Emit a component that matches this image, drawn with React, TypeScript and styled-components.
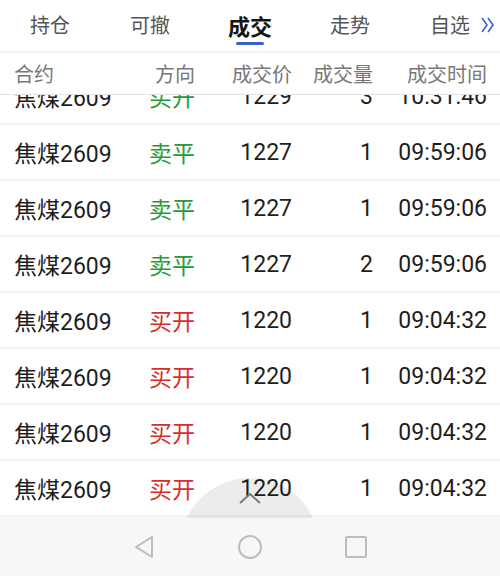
import React from "react";
import styled, { createGlobalStyle } from "styled-components";

const GlobalStyle = createGlobalStyle`
  html, body {
    margin: 0;
    padding: 0;
    background: #ffffff;
  }
  body {
    font-family: Roboto, "Noto Sans CJK SC", sans-serif;
  }
`;

const Screen = styled.div`
  position: relative;
  width: 500px;
  height: 576px;
  display: flex;
  flex-direction: column;
  overflow: hidden;
  background: #ffffff;
`;

const TabBar = styled.div`
  position: relative;
  height: 51px;
  display: grid;
  grid-template-columns: repeat(5, 100px);
  border-bottom: 2px solid #f2f2f2;
  flex-shrink: 0;
`;

const Tab = styled.div<{ active?: boolean }>`
  position: relative;
  display: flex;
  align-items: center;
  justify-content: center;
  padding-bottom: 2px;
  font-size: ${(p) => (p.active ? "22px" : "20px")};
  font-weight: ${(p) => (p.active ? 700 : 400)};
  color: ${(p) => (p.active ? "#141414" : "#555555")};

  &::after {
    content: "";
    display: ${(p) => (p.active ? "block" : "none")};
    position: absolute;
    left: 36px;
    bottom: 6px;
    width: 28px;
    height: 3px;
    border-radius: 2px;
    background: #3d62c6;
  }
`;

const MoreIcon = styled.svg`
  position: absolute;
  right: 5px;
  top: 16px;
`;

const Columns = `
  display: grid;
  grid-template-columns: 116px 65px 97px 81px 114px;
  padding: 0 13px 0 14px;
  align-items: center;
`;

const HeaderRow = styled.div`
  ${Columns}
  padding-right: 15px;
  height: 41px;
  border-bottom: 1px solid #e2e2e2;
  font-size: 20px;
  color: #777777;
  flex-shrink: 0;
  position: relative;
  z-index: 1;
  background: #ffffff;
`;

const Cell = styled.div<{ align?: "left" | "right" }>`
  text-align: ${(p) => p.align ?? "right"};
  white-space: nowrap;
`;

const ListViewport = styled.div`
  flex: 1;
  overflow: hidden;
`;

const List = styled.div`
  margin-top: -26px;
`;

const Row = styled.div`
  ${Columns}
  height: 54px;
  border-bottom: 2px solid #f3f3f3;
  font-size: 23px;
  color: #1e1e1e;
`;

const Side = styled(Cell)<{ kind: "buy" | "sell" }>`
  color: ${(p) => (p.kind === "buy" ? "#d6302b" : "#279b3b")};
`;

const NavBar = styled.div`
  height: 58px;
  flex-shrink: 0;
  background: #f7f7f7;
  display: flex;
  align-items: center;
  justify-content: center;
  gap: 82px;
  padding-top: 2px;
`;

const Drawer = styled.div`
  position: absolute;
  left: 180px;
  top: 478px;
  width: 140px;
  height: 40px;
  overflow: hidden;
  display: flex;
  justify-content: center;
`;

const DrawerCap = styled.div`
  flex-shrink: 0;
  width: 140px;
  height: 140px;
  border-radius: 50%;
  background: rgba(0, 0, 0, 0.075);
  display: flex;
  justify-content: center;
  padding-top: 14px;
  box-sizing: border-box;
`;

type Trade = {
  name: string;
  side: "buy" | "sell";
  label: string;
  price: number;
  qty: number;
  time: string;
};

const trades: Trade[] = [
  { name: "焦煤2609", side: "sell", label: "买开", price: 1229, qty: 3, time: "10:31:46" },
  { name: "焦煤2609", side: "sell", label: "卖平", price: 1227, qty: 1, time: "09:59:06" },
  { name: "焦煤2609", side: "sell", label: "卖平", price: 1227, qty: 1, time: "09:59:06" },
  { name: "焦煤2609", side: "sell", label: "卖平", price: 1227, qty: 2, time: "09:59:06" },
  { name: "焦煤2609", side: "buy", label: "买开", price: 1220, qty: 1, time: "09:04:32" },
  { name: "焦煤2609", side: "buy", label: "买开", price: 1220, qty: 1, time: "09:04:32" },
  { name: "焦煤2609", side: "buy", label: "买开", price: 1220, qty: 1, time: "09:04:32" },
  { name: "焦煤2609", side: "buy", label: "买开", price: 1220, qty: 1, time: "09:04:32" },
];

const tabs = ["持仓", "可撤", "成交", "走势", "自选"];

export default function App() {
  return (
    <>
      <GlobalStyle />
      <Screen>
        <TabBar>
          {tabs.map((t) => (
            <Tab key={t} active={t === "成交"}>
              {t}
            </Tab>
          ))}
          <MoreIcon width="14" height="18" viewBox="0 0 14 18" fill="none" stroke="#3d62c6" strokeWidth="1.6">
            <polyline points="1,2 6,9 1,16" />
            <polyline points="7,2 12,9 7,16" />
          </MoreIcon>
        </TabBar>

        <HeaderRow>
          <Cell align="left">合约</Cell>
          <Cell>方向</Cell>
          <Cell>成交价</Cell>
          <Cell>成交量</Cell>
          <Cell>成交时间</Cell>
        </HeaderRow>

        <ListViewport>
          <List>
            {trades.map((t, i) => (
              <Row key={i}>
                <Cell align="left">{t.name}</Cell>
                <Side kind={t.side}>{t.label}</Side>
                <Cell>{t.price}</Cell>
                <Cell>{t.qty}</Cell>
                <Cell>{t.time}</Cell>
              </Row>
            ))}
          </List>
        </ListViewport>

        <NavBar>
          <svg width="22" height="24" viewBox="0 0 22 24" fill="none" stroke="#bdbdbd" strokeWidth="2" strokeLinejoin="round">
            <polygon points="19,2 19,22 3,12" />
          </svg>
          <svg width="26" height="26" viewBox="0 0 26 26" fill="none" stroke="#bdbdbd" strokeWidth="2">
            <circle cx="13" cy="13" r="11" />
          </svg>
          <svg width="22" height="22" viewBox="0 0 22 22" fill="none" stroke="#bdbdbd" strokeWidth="2">
            <rect x="1" y="1" width="20" height="20" rx="1.5" />
          </svg>
        </NavBar>

        <Drawer>
          <DrawerCap>
            <svg width="22" height="12" viewBox="0 0 22 12" fill="none" stroke="#7a7a7a" strokeWidth="2">
              <polyline points="1,11 11,2 21,11" />
            </svg>
          </DrawerCap>
        </Drawer>
      </Screen>
    </>
  );
}
